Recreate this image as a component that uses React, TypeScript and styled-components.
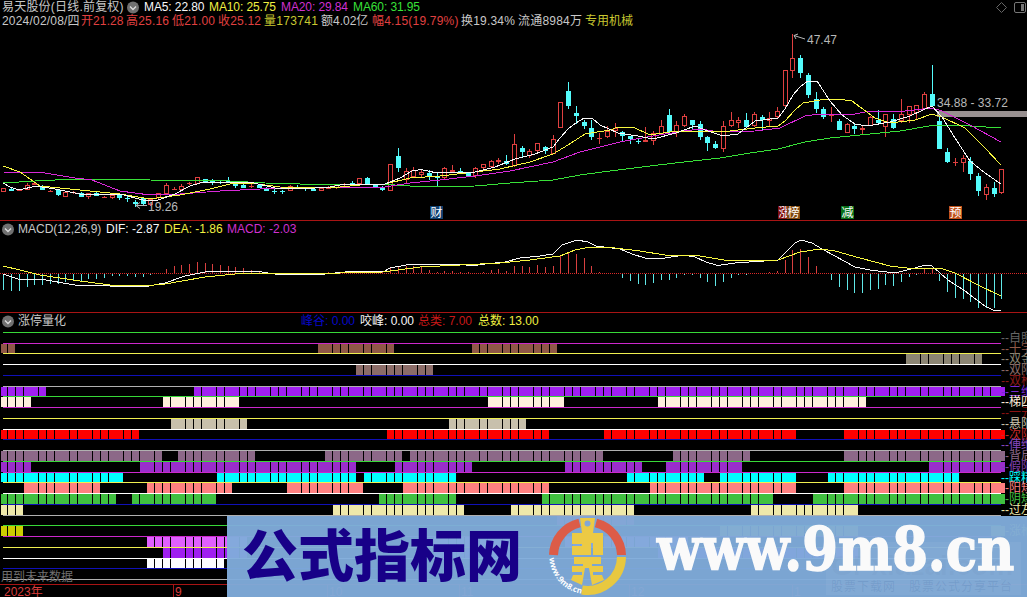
import styled, { createGlobalStyle } from "styled-components";

const GlobalStyle = createGlobalStyle`
    body {
        margin: 0;
        background: #000;
        overflow: hidden;
    }
`;

const Screen = styled.main`
    position: relative;
    display: grid;
    grid-template-rows: 220px 92px 272px 13px;
    width: 1027px;
    height: 597px;
    overflow: hidden;
    background: #000;
    color: #c8c8c8;
    font: 12px/14px "Liberation Sans", "Noto Sans CJK SC", sans-serif;
    white-space: pre;
`;

const Panel = styled.section`
    display: grid;
    overflow: hidden;
    border-top: 1px solid #a81414;

    &:first-child {
        border-top: 0;
    }

    > * {
        grid-area: 1 / 1;
    }
`;

const Plot = styled.svg`
    display: block;
    font: 12px "Liberation Sans", "Noto Sans CJK SC", sans-serif;
`;

const Header = styled.header<{ $top?: number }>`
    z-index: 1;
    display: flex;
    flex-direction: column;
    align-self: start;
    padding: ${(p) => p.$top ?? 0}px 0 0 2px;
`;

const InfoRow = styled.div`
    display: flex;
    align-items: center;
    height: 14px;
`;

const Item = styled.span<{ $w: number; $color?: string; $track?: number }>`
    flex: none;
    width: ${(p) => p.$w}px;
    color: ${(p) => p.$color ?? "#c8c8c8"};
    letter-spacing: ${(p) => p.$track ?? 0}px;
`;

const Toggle = styled.span<{ $gap: number }>`
    flex: none;
    display: flex;
    margin-right: ${(p) => p.$gap}px;
`;

const WindowIcons = styled.div`
    z-index: 1;
    display: flex;
    gap: 6px;
    align-self: start;
    justify-self: end;
    padding: 1px 0 0 0;
`;

const Axis = styled.footer`
    display: flex;
    align-items: flex-start;
    box-sizing: border-box;
    border-top: 1px solid #a81414;
    color: #d83c3c;
    line-height: 15px;
`;

const AxisLabel = styled.span<{ $w: number; $tick?: boolean }>`
    box-sizing: border-box;
    flex: none;
    width: ${(p) => p.$w}px;
    height: 12px;
    padding-left: ${(p) => (p.$tick ? 1 : 4)}px;
    border-left: ${(p) => (p.$tick ? "1px solid #a81414" : "0")};
`;

const Banner = styled.aside`
    position: absolute;
    left: 227px;
    top: 516px;
    width: 800px;
    height: 81px;
    display: flex;
    background: rgba(128, 172, 219, 0.96);

    > * {
        flex: none;
    }
`;

const BannerTitle = styled.strong`
    width: 320px;
    padding-left: 15px;
    box-sizing: border-box;
    color: #180088;
    font: 900 56px/72px "Noto Sans CJK SC", sans-serif;
`;

const BannerUrl = styled.strong`
    margin-left: 30px;
    height: 81px;
    color: #fafafa;
    font: 700 60px/67px "DejaVu Serif", serif;
    -webkit-text-stroke: 1.5px #fafafa;
    transform-origin: 0 50%;
    transform: scaleX(0.855);
`;

const Ghost = styled.div`
    position: absolute;
    right: 6px;
    bottom: 2px;
    width: 195px;
    height: 53px;
    box-sizing: border-box;
    padding: 12px 0 0 5px;
    background: rgba(255, 255, 255, 0.05);
    color: rgba(90, 110, 160, 0.07);
    font: 700 28px/24px "Liberation Sans", sans-serif;
`;

const GhostLine = styled.div`
    color: rgba(50, 90, 150, 0.16);
    font: 12px/16px "Noto Sans CJK SC", sans-serif;
    letter-spacing: 1px;
`;

const RED = "#e04040";
const CYAN = "#54fcfc";

// Pixel column of the n-th trading day.
const col = (i: number) => Math.floor(3.89 + 7.736 * i);

// kind, high, body top, body bottom, low
type Candle = [string, number, number, number, number];
const candles: Candle[] = [
    ["r", 188, 188, 191, 191], ["c", 187, 189, 190, 190], ["r", 189, 190, 190, 190], ["r", 183, 185, 189, 189],
    ["r", 182, 183, 184, 184], ["c", 185, 186, 189, 189], ["r", 190, 191, 191, 191], ["c", 189, 190, 194, 195],
    ["r", 192, 192, 196, 196], ["r", 191, 192, 192, 193], ["c", 192, 193, 196, 196], ["r", 193, 193, 196, 198],
    ["c", 191, 193, 195, 195], ["r", 196, 197, 197, 197], ["r", 194, 195, 197, 198], ["c", 194, 195, 197, 199],
    ["c", 196, 198, 198, 201], ["c", 200, 202, 203, 206], ["c", 197, 198, 203, 205], ["r", 199, 199, 204, 205],
    ["r", 193, 193, 197, 198], ["r", 183, 185, 193, 193], ["r", 187, 189, 189, 189], ["r", 184, 186, 189, 189],
    ["r", 182, 183, 183, 184], ["r", 177, 177, 183, 183], ["c", 179, 179, 182, 182], ["c", 179, 181, 181, 184],
    ["c", 181, 182, 182, 183], ["c", 177, 181, 182, 182], ["c", 183, 184, 185, 187], ["c", 184, 185, 187, 187],
    ["r", 184, 186, 186, 187], ["c", 184, 185, 187, 187], ["c", 187, 188, 190, 190], ["c", 189, 191, 191, 193],
    ["c", 190, 191, 191, 193], ["r", 185, 186, 190, 190], ["c", 185, 187, 187, 188], ["c", 187, 188, 188, 190],
    ["c", 188, 189, 190, 190], ["r", 188, 188, 190, 190], ["r", 186, 187, 188, 188], ["r", 185, 185, 187, 188],
    ["r", 183, 184, 184, 186], ["c", 181, 183, 184, 184], ["r", 178, 178, 183, 183], ["c", 177, 178, 183, 183],
    ["c", 184, 185, 186, 186], ["c", 186, 187, 189, 190], ["r", 164, 164, 190, 190], ["c", 148, 156, 167, 171],
    ["r", 168, 171, 179, 182], ["r", 167, 170, 176, 176], ["r", 169, 172, 174, 176], ["c", 170, 173, 175, 179],
    ["c", 172, 177, 177, 185], ["r", 167, 168, 177, 178], ["r", 165, 170, 171, 172], ["c", 168, 171, 173, 173],
    ["c", 172, 173, 176, 176], ["r", 167, 168, 175, 177], ["r", 164, 164, 167, 169], ["r", 160, 161, 166, 166],
    ["r", 158, 160, 161, 163], ["c", 155, 161, 163, 164], ["r", 134, 144, 165, 166], ["c", 146, 148, 151, 156],
    ["r", 149, 151, 155, 157], ["r", 143, 143, 150, 151], ["c", 146, 147, 150, 153], ["r", 135, 139, 153, 153],
    ["r", 102, 102, 127, 127], ["c", 82, 91, 105, 108], ["c", 106, 113, 115, 123], ["c", 120, 122, 125, 128],
    ["c", 120, 128, 136, 139], ["r", 133, 138, 138, 143], ["r", 126, 131, 136, 137], ["r", 123, 128, 130, 136],
    ["c", 131, 132, 135, 141], ["c", 136, 136, 138, 143], ["c", 138, 141, 141, 143], ["r", 127, 140, 141, 141],
    ["r", 131, 133, 140, 144], ["r", 120, 126, 134, 134], ["c", 109, 115, 131, 133], ["r", 121, 125, 131, 136],
    ["r", 114, 116, 125, 126], ["c", 120, 120, 124, 128], ["c", 121, 124, 136, 139], ["c", 136, 137, 142, 150],
    ["c", 141, 144, 147, 148], ["r", 121, 126, 148, 151], ["r", 112, 120, 125, 126], ["r", 117, 120, 122, 127],
    ["c", 113, 120, 126, 127], ["r", 112, 114, 125, 126], ["c", 115, 117, 119, 129], ["r", 112, 118, 120, 126],
    ["r", 107, 111, 116, 117], ["r", 70, 70, 105, 106], ["r", 34, 58, 70, 77], ["c", 55, 58, 72, 77],
    ["c", 73, 75, 94, 97], ["c", 92, 99, 108, 112], ["c", 107, 109, 116, 118], ["r", 107, 115, 115, 121],
    ["c", 119, 121, 129, 129], ["r", 123, 124, 132, 132], ["c", 123, 126, 128, 133], ["r", 125, 128, 129, 133],
    ["r", 116, 117, 125, 125], ["c", 110, 120, 122, 123], ["r", 114, 114, 126, 136], ["c", 114, 119, 127, 128],
    ["r", 99, 114, 120, 122], ["r", 106, 106, 114, 122], ["r", 105, 105, 112, 119], ["r", 92, 94, 108, 108],
    ["c", 65, 94, 105, 106], ["c", 117, 121, 148, 148], ["c", 148, 152, 161, 162], ["r", 158, 162, 162, 165],
    ["r", 155, 158, 162, 171], ["c", 157, 161, 173, 179], ["c", 173, 176, 190, 195], ["r", 184, 187, 194, 199],
    ["c", 182, 188, 193, 196], ["r", 169, 169, 192, 193],
];

const averages = [
    { color: "#38e038", points: "3,183 35,181 65,179.500 150,180 230,181 265,183 300,184 385,184 400,185.500 430,187 475,186 510,183 553,180 580,175 610,171 650,166 684,162 720,158 750,153 778,149 805,142 830,138 860,135 900,131 932,125.500 970,126 1001,128" },
    { color: "#d828d8", points: "3,172 45,173 75,178 92,180 120,191 150,195 180,194 220,191 260,189 300,187 385,187 410,183 440,180 475,176 510,171 553,162 580,152 620,142 653,136 684,131 700,129 720,132 755,131 780,128 805,116 820,114 855,114 870,111 905,111 932,108 942,111 970,125 1001,142" },
    { color: "#f8f840", points: "3,166 20,172 40,186 80,190 120,194 150,199 180,195 210,189 230,184 250,183 280,187 330,188 370,184 385,184 410,178 440,176 475,172 500,169 530,162 553,154 568,145 585,134 610,130 618,127 633,127 650,135 676,131 710,131 730,131 755,128 778,126 785,121 795,110 803,103 820,100 838,99 852,101 860,107 875,118 890,123 915,120 932,114 942,117 965,128 985,148 1001,165" },
    { color: "#f8f8f8", points: "3,183 10,187 19,190 36,186 55,189 80,194 120,194 143,200 158,200 175,194 190,186 200,183 230,182 250,182 275,188 300,189 330,187 345,184 385,184 400,178 412,171 421,169.500 437,173 455,172 475,172 495,167 515,159 535,154 553,147 560,138 568,129 576,123 584,118 592,118 600,125 618,133 638,136 653,139 676,133 695,126 708,131 723,136 738,134 755,121 778,118 785,109 793,95 800,87 808,81 817,81 830,101 842,115 855,124 867,126 890,122 910,116 932,106 942,117 955,138 970,161 985,173 1001,184" },
];

const dif = "3,274 18,279 40,279 75,285 110,286 143,287 165,283 185,276 205,272 225,271 255,271 275,274 290,274 325,274 345,272 370,271 383,272 390,268 412,264 460,264 472,266 485,264 505,262 520,258 540,256 553,254 562,245 577,240 588,242 596,246 620,249 632,254 645,258 665,258 684,255 695,257 706,262 718,265.500 735,263 778,260 795,243 801,240 812,243 822,249 835,256 855,267 870,270 895,273 915,268 925,265 932,266 948,280 965,291 985,306 995,311 1001,310";
const dea = "3,266 20,270 40,275 80,281 110,285 143,286 165,284 205,277 235,274 250,273 340,273 383,272 420,267 460,265 500,263 530,260 560,256 575,250 590,247 615,248 640,251 665,255 684,255 700,256 730,261 778,260 800,252 820,249 835,251 860,258 890,266 915,269 940,268 955,273 980,286 1001,296";

// Positive values grow upwards from the zero line.
const histogram = [
    -16, -17, -17, -13, -11, -11, -10, -10, -8, -7, -7, -5, -5, -4, -2, -2, -2, -3, -3, -1,
    0, 4, 7, 8, 9, 11, 10, 9, 8, 7, 6, 5, 3, 1, 0, 0, 0, 0, 0, 0,
    0, 0, 1, 1, 1, 1, 1, 1, 1, 1, 5, 7, 7, 7, 6, 3, 1, 2, 2, 1,
    1, 0, 1, 3, 4, 2, 7, 7, 6, 8, 6, 7, 17, 21, 19, 15, 7, 1, 0, 0,
    -4, -7, -10, -11, -9, -6, -6, -4, -1, -1, -4, -8, -12, -8, -4, -1, -1, 0, 0, 1,
    2, 13, 23, 24, 16, 7, 0, -6, -13, -16, -19, -19, -16, -15, -11, -12, -8, -3, -1, 4,
    4, -7, -18, -24, -25, -28, -34, -34, -34, -25,
];

const cycle = ["#38d838", "#cc28cc", "#f0f050", "#ffffff", "#1010b8", "#b0b0b0"];

type Signal = { label: string; color: string; tone?: string; runs?: number[][] };
const signals: Signal[] = [
    { label: "自照", color: "#666" },
    { label: "十字", color: "#905848", runs: [[0, 1], [41, 50], [61, 71]] },
    { label: "双金", color: "#8c8674", runs: [[117, 126]] },
    { label: "双阳", color: "#8c6c68", runs: [[46, 55]] },
    { label: "双枪", color: "#8b1a1a" },
    { label: "三维", color: "#a020f0", tone: "#7828d0", runs: [[0, 5], [25, 129]] },
    { label: "梯四", color: "#ffeedc", runs: [[0, 3], [21, 30], [63, 72], [85, 111]] },
    { label: "一元", color: "#8b1212" },
    { label: "悬阳", color: "#c8c0ac", runs: [[22, 31], [58, 67]] },
    { label: "次阴", color: "#ff0000", tone: "#c82828", runs: [[0, 17], [50, 70], [78, 102], [109, 129]] },
    { label: "俥维", color: "#8848c0" },
    { label: "背后", color: "#8c6888", runs: [[0, 20], [23, 32], [42, 51], [53, 77], [87, 96], [109, 129]] },
    { label: "假阳", color: "#9a2ecc", tone: "#8040b0", runs: [[0, 3], [18, 45], [51, 60], [73, 82], [86, 95], [120, 129]] },
    { label: "踩精", color: "#00ffff", runs: [[0, 15], [28, 45], [47, 58], [81, 90], [93, 102], [107, 123]] },
    { label: "阳矮", color: "#ff8080", runs: [[3, 12], [19, 29], [37, 46], [52, 70], [84, 102], [109, 129]] },
    { label: "阴矮", color: "#40c040", runs: [[0, 14], [17, 27], [49, 58], [70, 99], [105, 129]] },
    { label: "过左", color: "#eee8aa", runs: [[0, 2], [43, 59], [66, 81], [97, 110]] },
    { label: "", color: "#d02070", runs: [[72, 81]] },
    { label: "涨枪", color: "#cccc00", runs: [[0, 2], [93, 110], [128, 129]] },
    { label: "", color: "#e060ff", runs: [[19, 31], [56, 65], [73, 88]] },
    { label: "", color: "#a020f0", runs: [[21, 31], [56, 65], [85, 110]] },
    { label: "", color: "#ffffff", runs: [[19, 28]] },
    { label: "", color: "#000" },
    { label: "", color: "#000" },
];

const rowY = (n: number) => Math.round(332 + n * 10.739);

function Chevron({ gap }: { gap: number }) {
    return (
        <Toggle $gap={gap}>
            <svg width="13" height="13" viewBox="0 0 13 13">
                <circle cx="6" cy="6.500" r="6" fill="#707070" />
                <path d="M3 5.500L6 8.500L9 5.500" fill="none" stroke="#ddd" strokeWidth="1.300" />
            </svg>
        </Toggle>
    );
}

function CandleMark({ data, index }: { data: Candle; index: number }) {
    const [kind, high, top, bottom, low] = data;
    const x = col(index);
    const up = kind === "r";
    const color = up ? RED : CYAN;
    const flat = bottom - top < 2;
    return (
        <g fill={color}>
            <rect x={x} y={high} width="1" height={Math.max(0, top - high)} />
            <rect x={x} y={bottom} width="1" height={low - bottom + 1} />
            {up && !flat ? (
                <rect x={x - 1.5} y={top + 0.5} width="4" height={bottom - top} fill="#000" stroke={color} />
            ) : (
                <rect x={x - 2} y={top} width="5" height={bottom - top + 1} />
            )}
        </g>
    );
}

function Badge({ x, text, fill }: { x: number; text: string; fill: string }) {
    return (
        <g>
            <rect x={x} y="206" width="13" height="13" fill={fill} />
            <text x={x + 0.5} y="217" fill="#fff">{text}</text>
        </g>
    );
}

function Emblem() {
    return (
        <svg width="80" height="81" viewBox="547 516 80 81">
            <g fill="none" strokeWidth="9">
                <path d="M553.500 555A34 34 0 0 1 579.500 523" stroke="#dc5c48" />
                <path d="M596 523A34 34 0 0 1 621.500 555" stroke="#dc5c48" />
                <path d="M621.500 557A34 34 0 0 1 582 590" stroke="#e8c840" />
            </g>
            <g fill="#ecca44">
                <path fillRule="evenodd" d="M580 518H595L593 533H582ZM587.500 520.500A3 3 0 1 0 587.500 526.500A3 3 0 1 0 587.500 520.500Z" />
                <path d="M572 533H603V555H593V543H591V555H572V546H582V544H572Z" />
                <path d="M574 557H601V564H592V566H603V572H593V575H602L604 580L592 585L589 568H585L582 585L571 580L573 575H582V572H572V566H583V564H574Z" />
            </g>
            <path id="rim" d="M549.500 558A38 38 0 0 0 584 594" fill="none" />
            <text fill="#fff" fontSize="8" fontWeight="700" fontFamily="Open Sans, sans-serif">
                <textPath href="#rim">www.9m8.cn</textPath>
            </text>
        </svg>
    );
}

export default function App() {
    return (
        <>
            <GlobalStyle />
            <Screen>
                <Panel>
                    <Header>
                        <InfoRow>
                            <Item $w={125} $track={0.2}>易天股份(日线.前复权)</Item>
                            <Chevron gap={4} />
                            <Item $w={65} $color="#f8f8f8" $track={-0.1}>MA5: 22.80</Item>
                            <Item $w={72} $color="#f0f040" $track={-0.1}>MA10: 25.75</Item>
                            <Item $w={72} $color="#d030d0" $track={-0.1}>MA20: 29.84</Item>
                            <Item $w={72} $color="#38e038" $track={-0.1}>MA60: 31.95</Item>
                        </InfoRow>
                        <InfoRow>
                            <Item $w={79} $track={0.2}>2024/02/08/四</Item>
                            <Item $w={45} $color={RED} $track={0.1}>开21.28</Item>
                            <Item $w={46} $color={RED} $track={0.2}>高25.16</Item>
                            <Item $w={46} $color={RED} $track={0.2}>低21.00</Item>
                            <Item $w={46} $color={RED} $track={0.2}>收25.12</Item>
                            <Item $w={57} $color="#c8c830" $track={0.3}>量173741</Item>
                            <Item $w={51}>额4.02亿</Item>
                            <Item $w={89} $color={RED} $track={0.2}>幅4.15(19.79%)</Item>
                            <Item $w={57} $track={0.2}>换19.34%</Item>
                            <Item $w={67} $track={0.2}>流通8984万</Item>
                            <Item $w={60} $color="#c8c830">专用机械</Item>
                        </InfoRow>
                    </Header>
                    <WindowIcons>
                        <svg width="13" height="13" viewBox="0 0 13 13" fill="none" stroke="#666">
                            <path d="M6.500 1.500L11.500 6.500L6.500 11.500L1.500 6.500Z" />
                        </svg>
                        <svg width="13" height="13" viewBox="0 0 13 13" fill="none" stroke="#777">
                            <rect x="0.500" y="1.500" width="11" height="10" rx="1.500" />
                            <rect x="7" y="3" width="3" height="7" fill="#777" stroke="none" />
                        </svg>
                    </WindowIcons>
                    <Plot width="1027" height="220" viewBox="0 0 1027 220">
                        <rect x="937" y="111" width="90" height="6" fill="#989090" />
                        <g shapeRendering="crispEdges">
                            {candles.map((c, i) => (
                                <CandleMark key={i} data={c} index={i} />
                            ))}
                            {averages.map((a) => (
                                <polyline key={a.color} points={a.points} fill="none" stroke={a.color} />
                            ))}
                        </g>
                        <g fill="none" stroke="#b8b8b8">
                            <path d="M805 39L794 35.500M798 34L794 35.500L796 39" />
                            <path d="M147 205.500H136M140 202.500L136 205.500L140 208.500" />
                        </g>
                        <g fill="#b8b8b8">
                            <text x="807" y="44">47.47</text>
                            <text x="148" y="211">19.26</text>
                            <text x="937" y="107" textLength="71">34.88 - 33.72</text>
                        </g>
                        <Badge x={430} text="财" fill="#104070" />
                        <Badge x={778} text="涨" fill="#801010" />
                        <Badge x={787} text="榜" fill="#804810" />
                        <Badge x={841} text="减" fill="#087018" />
                        <Badge x={949} text="预" fill="#c05018" />
                    </Plot>
                </Panel>

                <Panel>
                    <Header $top={1}>
                        <InfoRow>
                            <Chevron gap={3} />
                            <Item $w={88}>MACD(12,26,9)</Item>
                            <Item $w={58} $color="#f8f8f8">DIF: -2.87</Item>
                            <Item $w={63} $color="#f0f040">DEA: -1.86</Item>
                            <Item $w={72} $color="#d030d0">MACD: -2.03</Item>
                        </InfoRow>
                    </Header>
                    <Plot width="1027" height="91" viewBox="0 221 1027 91" shapeRendering="crispEdges">
                        <path d="M0 273.500H1027" stroke="#d82828" strokeDasharray="1 1" />
                        {histogram.map((v, i) => (
                            <rect
                                key={i}
                                x={col(i)}
                                y={v > 0 ? 273 - v : 274}
                                width="1"
                                height={Math.abs(v)}
                                fill={v > 0 ? "#d84040" : "#60e8e8"}
                            />
                        ))}
                        <polyline points={dif} fill="none" stroke="#f8f8f8" />
                        <polyline points={dea} fill="none" stroke="#f8f840" />
                    </Plot>
                </Panel>

                <Panel>
                    <Header $top={1}>
                        <InfoRow>
                            <Chevron gap={3} />
                            <Item $w={283}>涨停量化</Item>
                            <Item $w={59} $color="#0808c8">峰谷: 0.00</Item>
                            <Item $w={58} $color="#f8f8f8">咬峰: 0.00</Item>
                            <Item $w={60} $color="#c81818">总类: 7.00</Item>
                            <Item $w={66} $color="#f0f040">总数: 13.00</Item>
                        </InfoRow>
                    </Header>
                    <Plot width="1027" height="271" viewBox="0 313 1027 271">
                        <g shapeRendering="crispEdges">
                            {signals.map((s, n) =>
                                (s.runs ?? []).map(([from, to]) =>
                                    Array.from({ length: to - from + 1 }, (_, k) => {
                                        const x = Math.max(1, col(from + k) - 3);
                                        return (
                                            <rect
                                                key={`${n}-${from + k}`}
                                                x={x}
                                                y={rowY(n) + 1}
                                                width={col(from + k) + 4 - x}
                                                height={rowY(n + 1) - rowY(n) - 1}
                                                fill={s.color}
                                            />
                                        );
                                    })
                                )
                            )}
                            {signals.map((_, n) => (
                                <rect key={n} x="3" y={rowY(n)} width="998" height="1" fill={cycle[n % 6]} />
                            ))}
                        </g>
                        {signals.map((s, n) => (
                            <text key={n} x="1001" y={rowY(n) + 10} fill={s.tone ?? s.color}>
                                {s.label && <tspan>--</tspan>}
                                <tspan x="1009">{s.label}</tspan>
                            </text>
                        ))}
                        <text x="1" y="581" fill="#707070">用到未来数据</text>
                    </Plot>
                </Panel>

                <Axis>
                    <AxisLabel $w={173}>2023年</AxisLabel>
                    <AxisLabel $w={154} $tick>9</AxisLabel>
                    <AxisLabel $w={132} $tick>10</AxisLabel>
                    <AxisLabel $w={170} $tick>11</AxisLabel>
                    <AxisLabel $w={163} $tick>12</AxisLabel>
                    <AxisLabel $w={160} $tick>1</AxisLabel>
                </Axis>

                <Banner>
                    <BannerTitle>公式指标网</BannerTitle>
                    <Emblem />
                    <Ghost>
                        GPxiazai.com
                        <GhostLine>股票下载网　股票公式分享平台</GhostLine>
                    </Ghost>
                    <BannerUrl>www.9m8.cn</BannerUrl>
                </Banner>
            </Screen>
        </>
    );
}
